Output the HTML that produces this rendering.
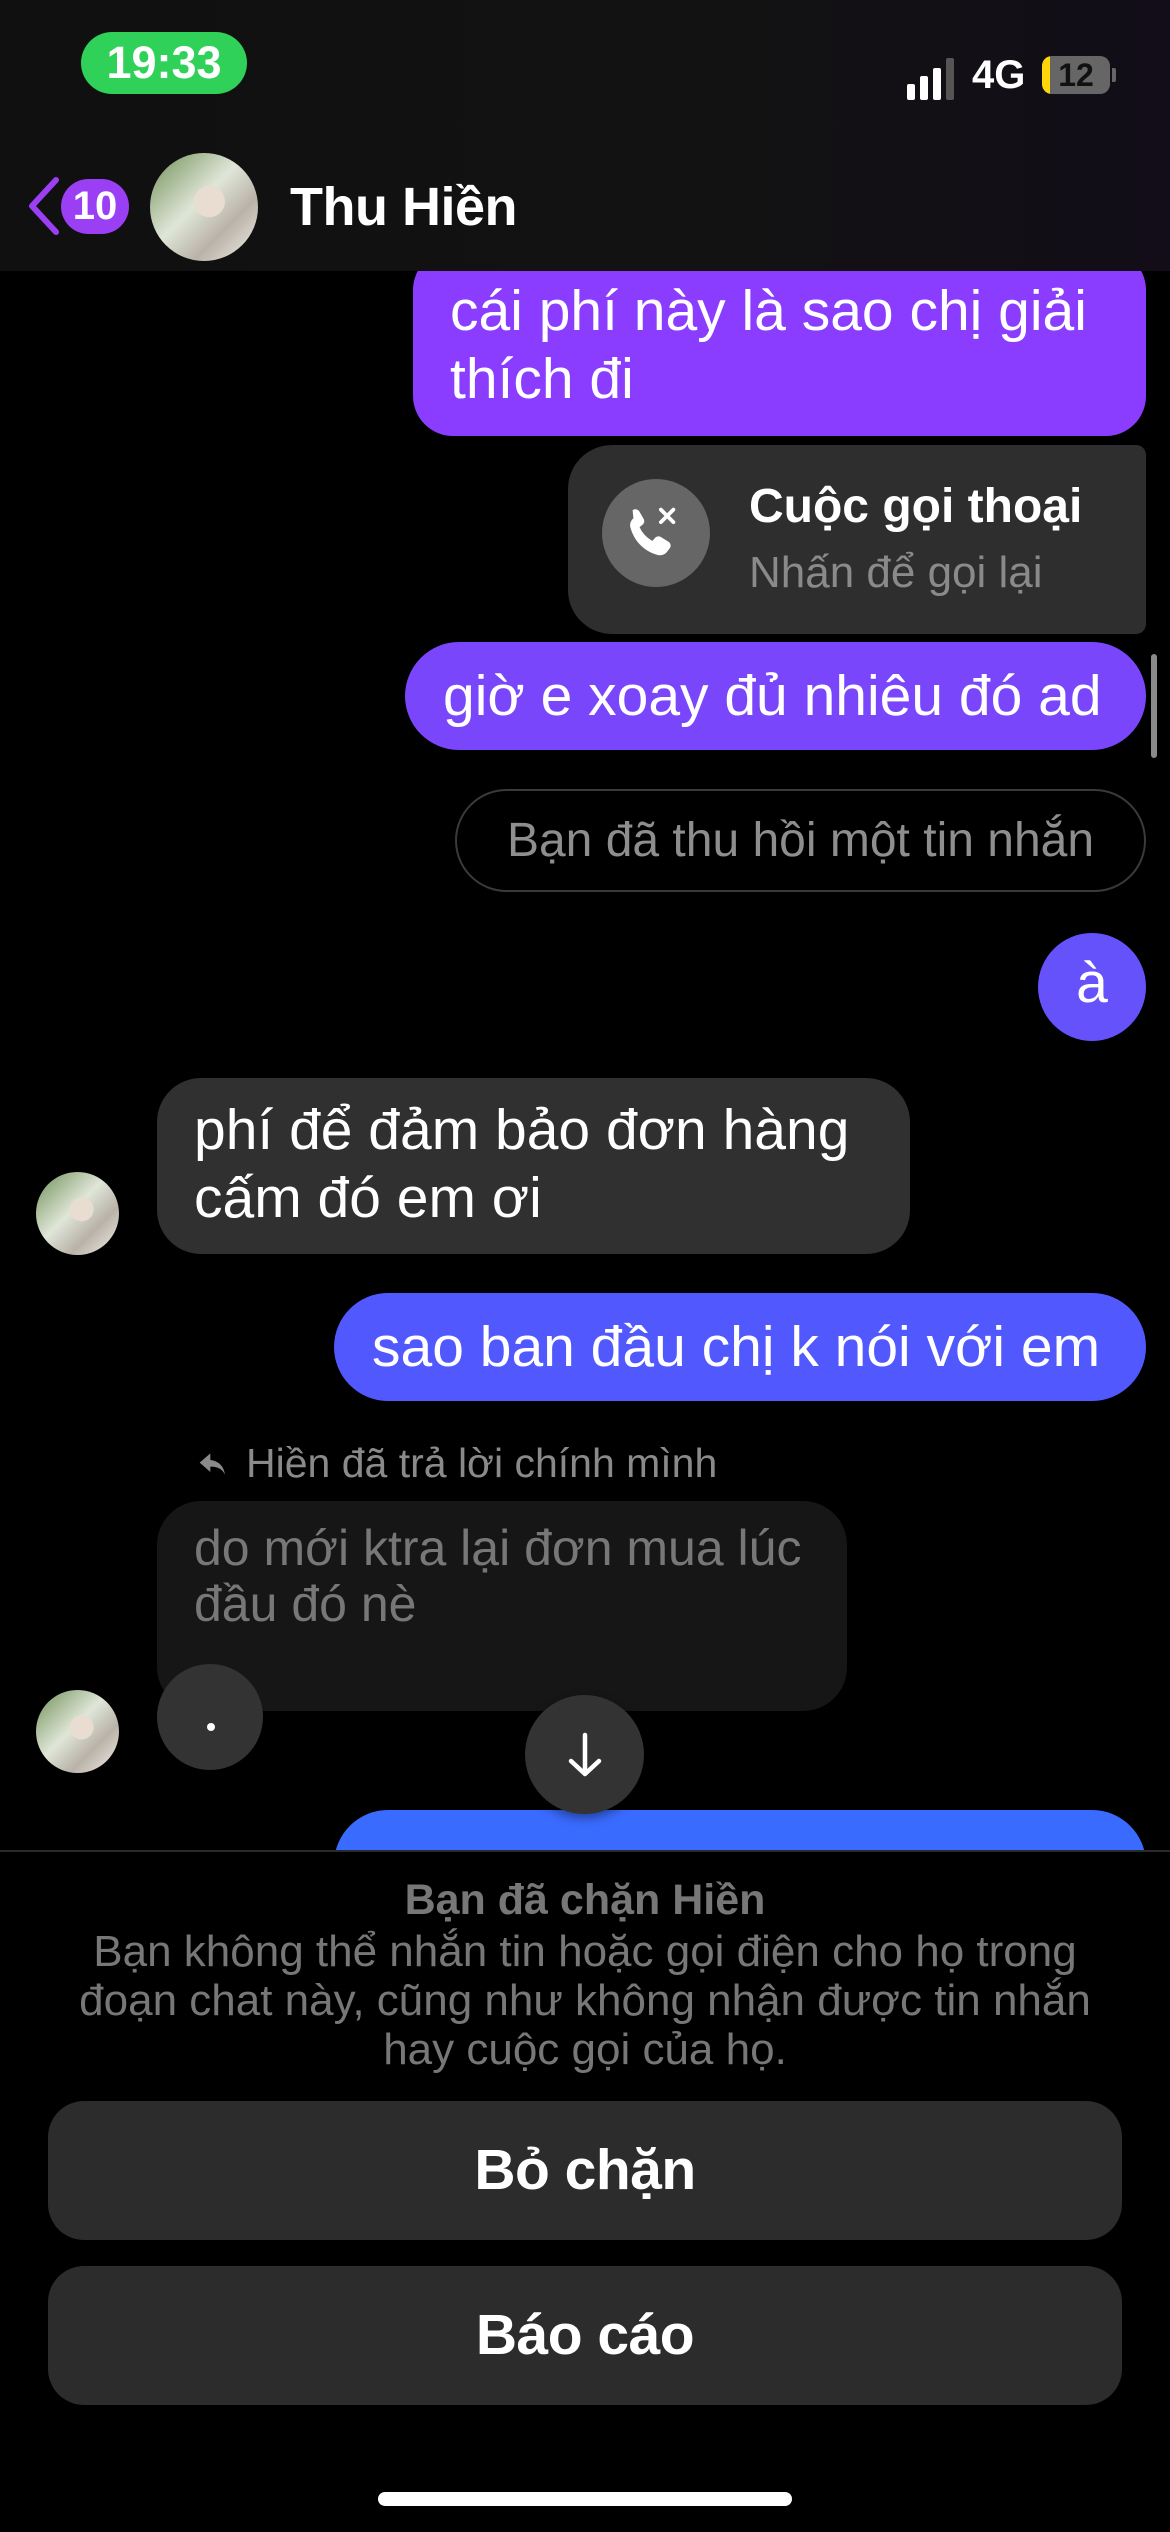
<!DOCTYPE html>
<html><head><meta charset="utf-8">
<style>
*{margin:0;padding:0;box-sizing:border-box}
html,body{width:1170px;height:2532px;background:#000;overflow:hidden;font-family:"Liberation Sans",sans-serif;color:#fff}
.a{position:absolute}
.b{position:absolute;font-size:57px;line-height:68px;padding:0 38px;display:flex;align-items:center;white-space:nowrap}
.av{position:absolute;border-radius:50%;background:radial-gradient(circle at 55% 45%,#e8ddd0 0 18%,transparent 19%),linear-gradient(135deg,#6f8f55,#dfe6d8 45%,#b9b2a8 70%,#f3f0ea);overflow:hidden}
</style></head><body>
<div class="a" style="left:0;top:0;width:1170px;height:271px;background:linear-gradient(90deg,#101010,#121212 60%,#120d18)"></div>
<div class="a" style="left:81px;top:32px;width:166px;height:62px;border-radius:31px;background:#30d158;font-size:45px;font-weight:bold;text-align:center;line-height:62px">19:33</div>
<div class="a" style="left:907px;top:84px;width:8px;height:16px;background:#fff;border-radius:2px"></div>
<div class="a" style="left:920px;top:76px;width:8px;height:24px;background:#fff;border-radius:2px"></div>
<div class="a" style="left:933px;top:68px;width:8px;height:32px;background:#fff;border-radius:2px"></div>
<div class="a" style="left:946px;top:58px;width:8px;height:42px;background:#555;border-radius:2px"></div>
<div class="a" style="left:972px;top:50px;font-size:40px;font-weight:bold;line-height:50px">4G</div>
<div class="a" style="left:1042px;top:56px;width:68px;height:38px;border-radius:10px;background:#666;overflow:hidden"><div style="width:8px;height:38px;background:#ffd60a"></div></div>
<div class="a" style="left:1042px;top:56px;width:68px;height:38px;font-size:32px;font-weight:bold;text-align:center;line-height:38px;color:#111">12</div>
<div class="a" style="left:1112px;top:68px;width:4px;height:14px;background:#666;border-radius:0 2px 2px 0"></div>
<svg class="a" style="left:24px;top:176px" width="40" height="60"><path d="M32 4 L8 30 L32 56" fill="none" stroke="#9b3ff5" stroke-width="6" stroke-linecap="round" stroke-linejoin="round"/></svg>
<div class="a" style="left:61px;top:179px;width:68px;height:55px;border-radius:28px;background:#9b3ff5;font-size:40px;font-weight:bold;text-align:center;line-height:55px">10</div>
<div class="av" style="left:150px;top:153px;width:108px;height:108px"></div>
<div class="a" style="left:290px;top:175px;font-size:54px;font-weight:bold;line-height:64px;letter-spacing:-0.5px">Thu Hiền</div>
<div class="a" style="left:413px;top:250px;width:733px;height:186px;background:#8b3dff;border-radius:40px;clip-path:inset(21px 0 0 0)"></div>
<div class="a" style="left:450px;top:277px;font-size:57px;line-height:68px;white-space:nowrap">cái phí này là sao chị giải<br>thích đi</div>
<div class="a" style="left:568px;top:445px;width:578px;height:189px;background:#2e2e2e;border-radius:44px 10px 10px 44px"></div>
<div class="a" style="left:602px;top:479px;width:108px;height:108px;border-radius:50%;background:#666"></div>
<svg class="a" style="left:618px;top:500px" width="70" height="70" viewBox="0 0 24 24"><path d="M5 3.5c.8-.6 1.8-.4 2.3.4l1.5 2.6c.4.7.2 1.5-.4 2l-1 .8c.9 2 2.5 3.7 4.4 4.7l.9-1c.5-.6 1.4-.7 2-.3l2.6 1.6c.8.5 1 1.5.4 2.3l-.9 1.2c-.8 1-2.1 1.4-3.3 1C9 17.6 5.6 14.2 4.3 9.6c-.4-1.2 0-2.5 1-3.3z" fill="#fff"/><path d="M14.7 3.3l4.3 4.3M19 3.3l-4.3 4.3" stroke="#fff" stroke-width="1.3" stroke-linecap="round"/></svg>
<div class="a" style="left:749px;top:478px;font-size:48px;font-weight:bold;line-height:58px;white-space:nowrap">Cuộc gọi thoại</div>
<div class="a" style="left:749px;top:546px;font-size:44px;line-height:54px;color:#8a8a8a;white-space:nowrap">Nhấn để gọi lại</div>
<div class="b" style="left:405px;top:642px;width:741px;height:108px;border-radius:54px;background:#7a46fb">giờ e xoay đủ nhiêu đó ad</div>
<div class="a" style="left:1151px;top:654px;width:6px;height:104px;border-radius:3px;background:#8a8a8a"></div>
<div class="a" style="left:455px;top:789px;width:691px;height:103px;border-radius:52px;border:2px solid #3a3a3a;font-size:48px;line-height:99px;text-align:center;color:#8e8e8e;white-space:nowrap">Bạn đã thu hồi một tin nhắn</div>
<div class="a" style="left:1038px;top:933px;width:108px;height:108px;border-radius:50%;background:#6552fb;font-size:57px;text-align:center;line-height:100px">à</div>
<div class="av" style="left:36px;top:1172px;width:83px;height:83px"></div>
<div class="a" style="left:157px;top:1078px;width:753px;height:176px;border-radius:44px;background:#303030"></div>
<div class="a" style="left:194px;top:1096px;font-size:57px;line-height:68px;white-space:nowrap">phí để đảm bảo đơn hàng<br>cấm đó em ơi</div>
<div class="b" style="left:334px;top:1293px;width:812px;height:108px;border-radius:54px;background:#5159fe">sao ban đầu chị k nói với em</div>
<svg class="a" style="left:197px;top:1448px" width="32" height="32" viewBox="0 0 24 24"><path d="M10 4L2 11l8 7v-4c6 0 9 2 11 6-1-6-4-10-11-11z" fill="#8a8a8a"/></svg>
<div class="a" style="left:246px;top:1438px;font-size:41px;line-height:50px;color:#8a8a8a;white-space:nowrap">Hiền đã trả lời chính mình</div>
<div class="a" style="left:157px;top:1501px;width:690px;height:210px;border-radius:44px;background:#161616"></div>
<div class="a" style="left:194px;top:1520px;font-size:50px;line-height:56px;color:#777;white-space:nowrap">do mới ktra lại đơn mua lúc<br>đầu đó nè</div>
<div class="av" style="left:36px;top:1690px;width:83px;height:83px"></div>
<div class="a" style="left:157px;top:1664px;width:106px;height:106px;border-radius:50%;background:#333"></div>
<div class="a" style="left:207px;top:1723px;width:8px;height:8px;border-radius:50%;background:#fff"></div>
<div class="a" style="left:334px;top:1810px;width:812px;height:108px;border-radius:54px;background:#3a6bff"></div>
<div class="a" style="left:525px;top:1695px;width:119px;height:119px;border-radius:50%;background:#333;box-shadow:0 4px 10px rgba(0,0,0,.4)"></div>
<svg class="a" style="left:560px;top:1730px" width="50" height="50" viewBox="0 0 50 50"><path d="M25 5V44M11 31l14 13 14-13" fill="none" stroke="#fff" stroke-width="4.5" stroke-linecap="round" stroke-linejoin="round"/></svg>
<div class="a" style="left:0;top:1850px;width:1170px;height:682px;background:#000;border-top:2px solid #2a2a2a"></div>
<div class="a" style="left:0;top:1874px;width:1170px;text-align:center;font-size:43px;font-weight:bold;line-height:52px;color:#777">Bạn đã chặn Hiền</div>
<div class="a" style="left:0;top:1927px;width:1170px;text-align:center;font-size:44px;line-height:49px;color:#777;white-space:nowrap">Bạn không thể nhắn tin hoặc gọi điện cho họ trong<br>đoạn chat này, cũng như không nhận được tin nhắn<br>hay cuộc gọi của họ.</div>
<div class="a" style="left:48px;top:2101px;width:1074px;height:139px;border-radius:36px;background:#2c2c2c;font-size:57px;font-weight:bold;text-align:center;line-height:139px;letter-spacing:-0.5px">Bỏ chặn</div>
<div class="a" style="left:48px;top:2266px;width:1074px;height:139px;border-radius:36px;background:#2c2c2c;font-size:57px;font-weight:bold;text-align:center;line-height:139px;letter-spacing:-0.5px">Báo cáo</div>
<div class="a" style="left:378px;top:2492px;width:414px;height:14px;border-radius:7px;background:#fff"></div>
</body></html>
